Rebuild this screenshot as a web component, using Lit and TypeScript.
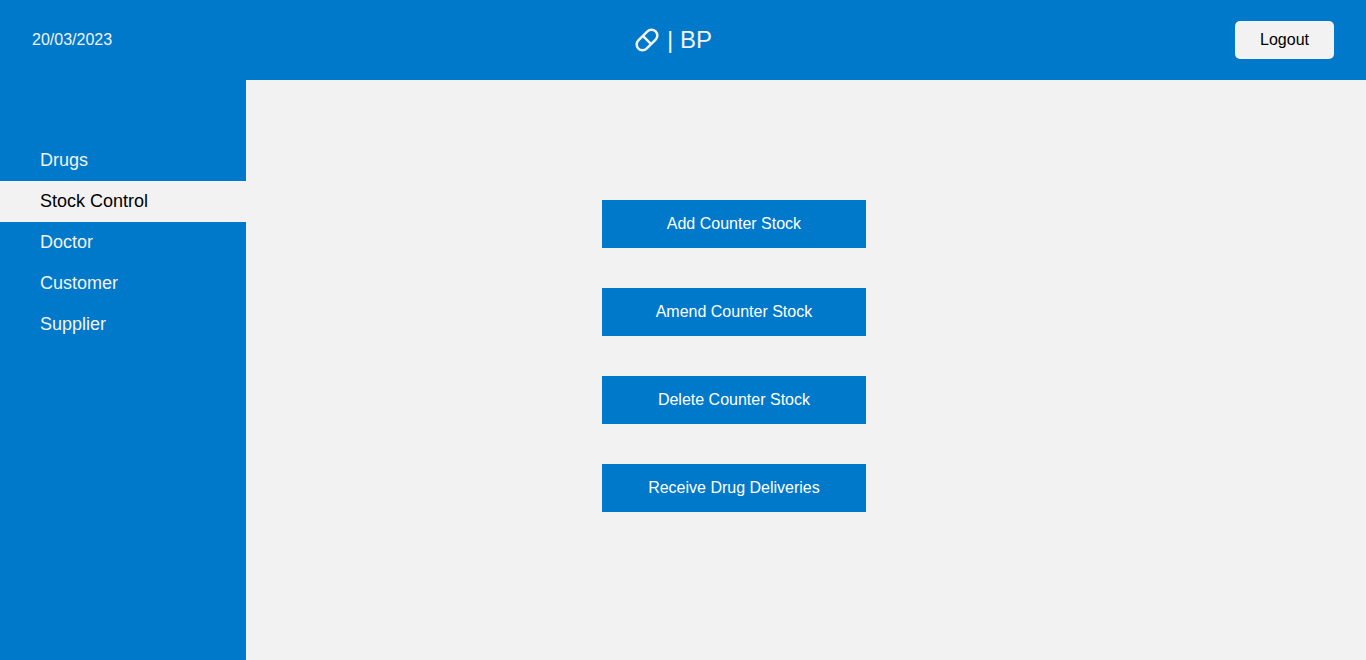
import { LitElement, html, css } from "lit";
import { customElement, state } from "lit/decorators.js";

const SECTIONS = ["Drugs", "Stock Control", "Doctor", "Customer", "Supplier"];

const ACTIONS = [
  "Add Counter Stock",
  "Amend Counter Stock",
  "Delete Counter Stock",
  "Receive Drug Deliveries",
];

@customElement("app-root")
export class AppRoot extends LitElement {
  @state() private section = "Stock Control";

  static styles = css`
    :host {
      --blue: #0079ca;
      --light: #f2f2f2;
      display: flex;
      flex-direction: column;
      min-height: 100vh;
      background: var(--light);
      font-family: "Liberation Sans", Arial, sans-serif;
      font-size: 16px;
    }
    * {
      box-sizing: border-box;
    }
    .header {
      display: flex;
      align-items: center;
      justify-content: space-between;
      height: 80px;
      padding: 0 32px;
      background: var(--blue);
      color: var(--light);
    }
    .brand {
      display: flex;
      align-items: center;
      gap: 8px;
      font-size: 24px;
      line-height: 28px;
    }
    .pill {
      width: 24px;
      height: 24px;
    }
    .logout {
      padding: 10px 25px;
      border: 0;
      border-radius: 5px;
      background: var(--light);
      color: #000;
      font: inherit;
      line-height: 18px;
      cursor: pointer;
    }
    .body {
      display: flex;
      flex: 1;
    }
    .sidebar {
      width: 18%;
      padding-top: 60px;
      background: var(--blue);
    }
    .link {
      display: block;
      padding: 10px 40px;
      color: var(--light);
      font-size: 18px;
      line-height: 21px;
      text-decoration: none;
    }
    .link.active {
      background: var(--light);
      color: #000;
    }
    .content {
      display: flex;
      flex: 1;
      flex-direction: column;
      align-items: center;
      gap: 40px;
      padding: 120px 144px 40px 0;
    }
    .action {
      width: 264px;
      padding: 15px 20px;
      border: 0;
      background: var(--blue);
      color: #fff;
      font: inherit;
      line-height: 18px;
      cursor: pointer;
    }
  `;

  render() {
    return html`
      <header class="header">
        <time datetime="2023-03-20">20/03/2023</time>
        <div class="brand">
          <svg
            class="pill"
            viewBox="0 0 24 24"
            fill="none"
            stroke="currentColor"
            stroke-width="2.5"
            aria-hidden="true"
          >
            <g transform="rotate(-45 12 12)">
              <rect x="-0.2" y="6.2" width="24.4" height="11.6" rx="5.8" />
              <path d="M12 6.2v11.6" />
            </g>
          </svg>
          <span>| BP</span>
        </div>
        <button class="logout" type="button">Logout</button>
      </header>
      <div class="body">
        <nav class="sidebar">
          ${SECTIONS.map(
            (name) => html`<a
              class="link ${name === this.section ? "active" : ""}"
              href="#"
              @click=${(e: Event) => {
                e.preventDefault();
                this.section = name;
              }}
              >${name}</a
            >`
          )}
        </nav>
        <main class="content">
          ${ACTIONS.map(
            (label) => html`<button class="action" type="button">${label}</button>`
          )}
        </main>
      </div>
    `;
  }
}
